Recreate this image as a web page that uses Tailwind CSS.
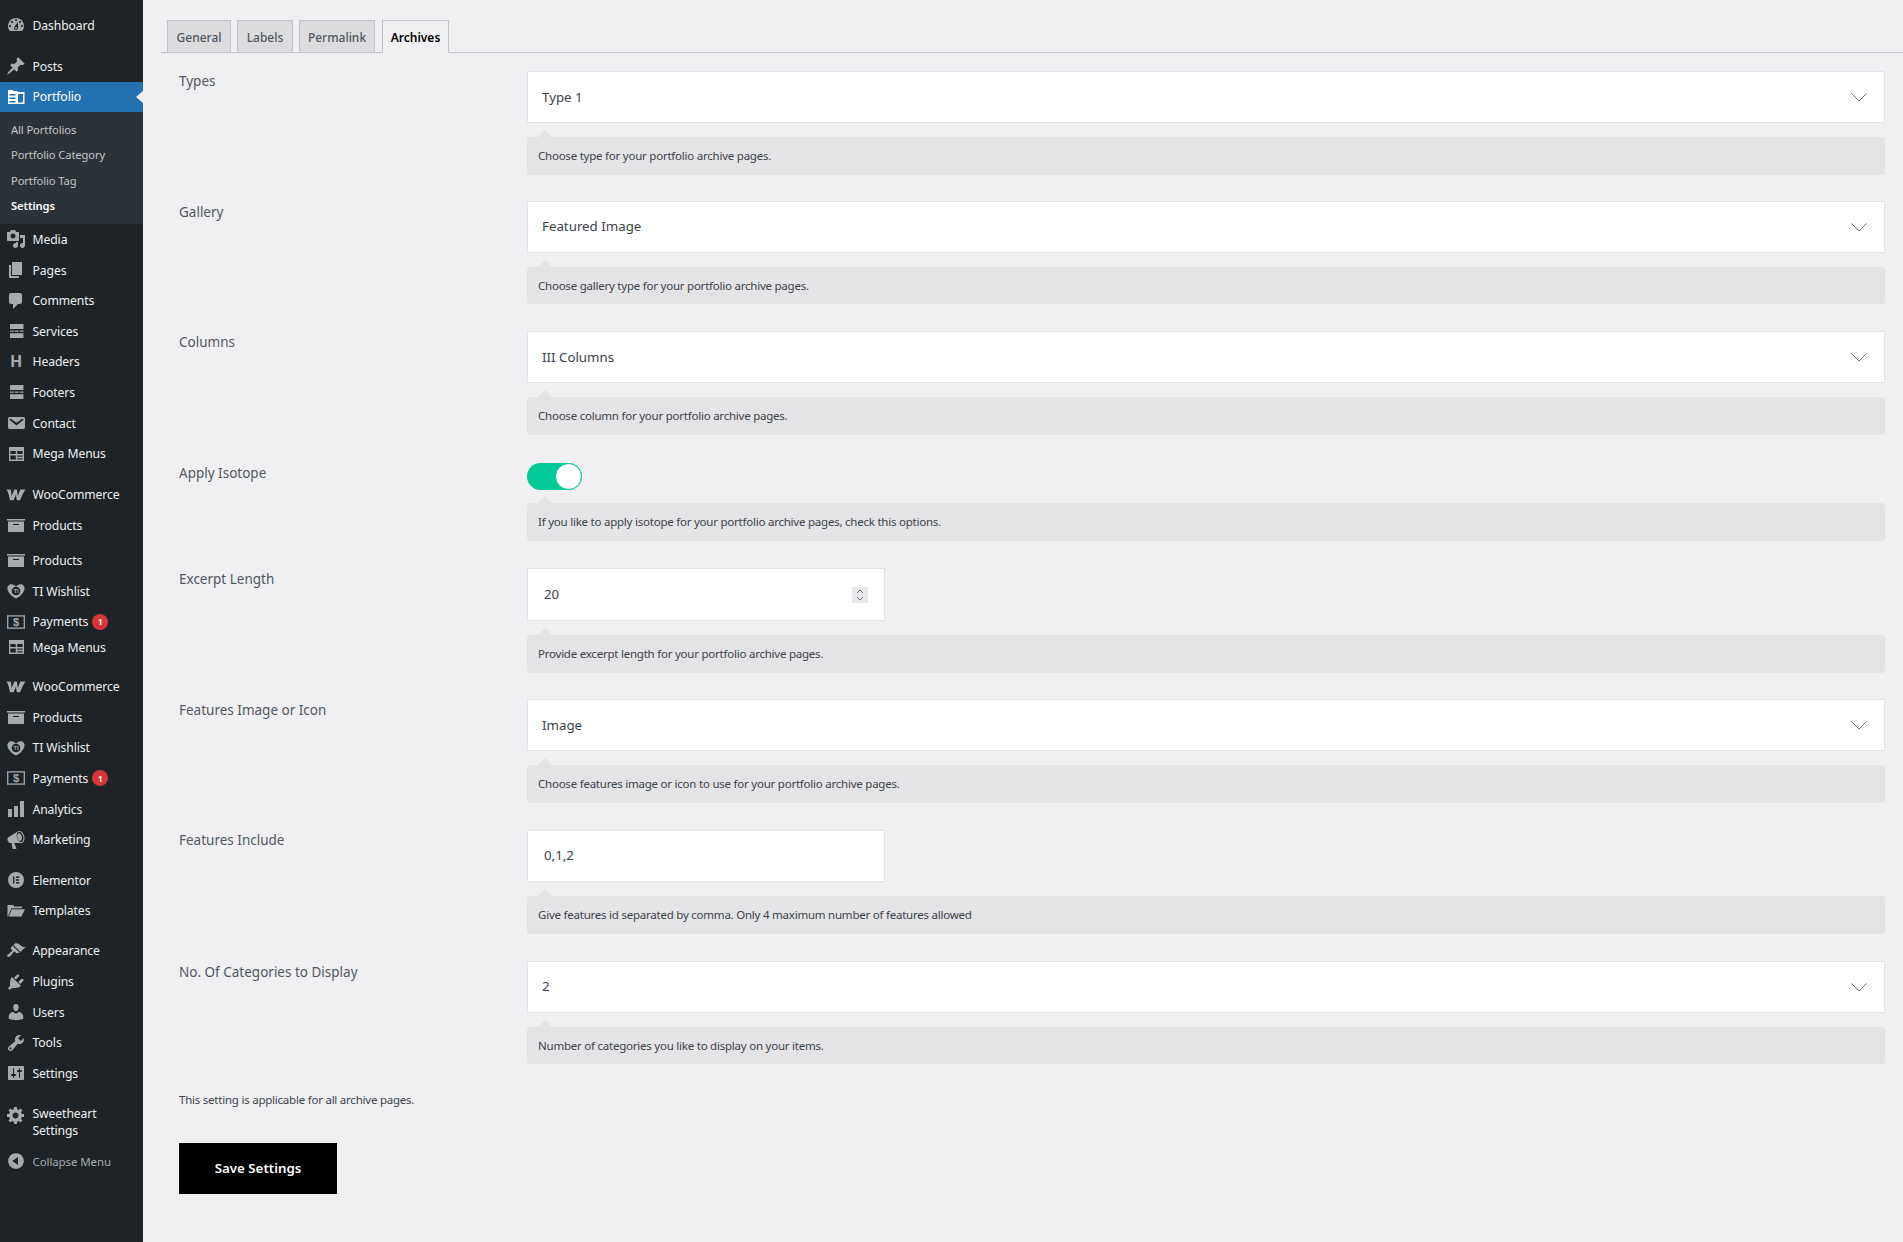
<!DOCTYPE html>
<html>
<head>
<meta charset="utf-8">
<script src="https://cdn.jsdelivr.net/npm/@tailwindcss/browser@4"></script>
</head>
<body class="bg-[#f0f0f2] font-['Noto_Sans',sans-serif] overflow-hidden">
<svg class="hidden">
<defs>
<symbol id="i-dash" viewBox="0 0 20 20"><path d="M3.76 16h12.48c1.1-1.37 1.76-3.11 1.76-5 0-4.42-3.58-8-8-8s-8 3.58-8 8c0 1.89.66 3.63 1.76 5zM10 4c.55 0 1 .45 1 1s-.45 1-1 1-1-.45-1-1 .45-1 1-1zM6 6c.55 0 1 .45 1 1s-.45 1-1 1-1-.45-1-1 .45-1 1-1zm8 0c.55 0 1 .45 1 1s-.45 1-1 1-1-.45-1-1 .45-1 1-1zm-5.37 5.55L12 7v6c0 1.1-.9 2-2 2s-2-.9-2-2c0-.57.24-1.08.63-1.45zM4 10c.55 0 1 .45 1 1s-.45 1-1 1-1-.45-1-1 .45-1 1-1zm12 0c.55 0 1 .45 1 1s-.45 1-1 1-1-.45-1-1 .45-1 1-1zm-5 3c0-.55-.45-1-1-1s-1 .45-1 1 .45 1 1 1 1-.45 1-1z" fill-rule="evenodd"/></symbol>
<symbol id="i-pin" viewBox="0 0 20 20"><path d="M10.44 3.02l1.82-1.82 6.36 6.35-1.83 1.82c-1.05-.68-2.48-.57-3.41.36l-.75.75c-.92.93-1.04 2.35-.35 3.41l-1.83 1.82-2.41-2.41-2.8 2.79c-.42.42-3.38 2.71-3.8 2.29s1.86-3.39 2.28-3.81l2.79-2.79L4.1 9.36l1.83-1.82c1.05.69 2.48.57 3.4-.36l.75-.75c.93-.92 1.05-2.35.36-3.41z"/></symbol>
<symbol id="i-portfolio" viewBox="0 0 20 20"><path fill-rule="evenodd" d="M2 3h5v1h4.500v1H18.500v12H2zM3.500 7v1.500h6V7zM3.500 10.500V12h6v-1.500zM3.500 14v1.500h6V14zM12 7v8.500h5V7z"/></symbol>
<symbol id="i-media" viewBox="0 0 20 20"><path fill-rule="evenodd" d="M13 11V4c0-.55-.45-1-1-1h-1.670L9 1H5L3.670 3H2c-.55 0-1 .45-1 1v7c0 .55.45 1 1 1h10c.55 0 1-.45 1-1zM7 4.500c1.380 0 2.500 1.120 2.500 2.500S8.380 9.500 7 9.500 4.500 8.380 4.500 7 5.620 4.500 7 4.500zM14 6h5v10.500c0 1.380-1.120 2.500-2.500 2.500S14 17.880 14 16.500s1.120-2.500 2.500-2.500c.170 0 .340.020.5.050V9h-3V6zm-4 8.050V13h2v3.500c0 1.380-1.120 2.500-2.500 2.500S7 17.880 7 16.500 8.120 14 9.500 14c.170 0 .340.020.5.050z"/></symbol>
<symbol id="i-page" viewBox="0 0 20 20"><path d="M6 15V2h10v13H6zm-1 1h8v2H3V5h2v11z"/></symbol>
<symbol id="i-comment" viewBox="0 0 20 20"><path d="M5 2h9c1.100 0 2 .9 2 2v7c0 1.100-.9 2-2 2h-2l-5 5v-5H5c-1.100 0-2-.9-2-2V4c0-1.100.9-2 2-2z"/></symbol>
<symbol id="i-rows" viewBox="0 0 20 20"><path d="M4 3h13.500v5H4zM4 9.400h3.800v1.400H4zM8.800 9.400h3.800v1.400H8.800zM13.700 9.400h3.800v1.400h-3.800zM4 12.200h13.500V17H4z"/></symbol>
<symbol id="i-mail" viewBox="0 0 20 20"><path fill-rule="evenodd" d="M3.870 4h13.250C18.370 4 19 4.590 19 5.790v8.420c0 1.190-.63 1.790-1.880 1.790H3.870c-1.250 0-1.880-.6-1.880-1.790V5.790c0-1.200.63-1.790 1.880-1.790zm6.620 8.600l6.740-5.530c.24-.2.43-.66.130-1.070-.29-.41-.82-.42-1.170-.17l-5.700 3.860L4.800 5.830c-.35-.25-.88-.24-1.170.170-.3.410-.11.870.130 1.070l6.730 5.530z"/></symbol>
<symbol id="i-table" viewBox="0 0 20 20"><path fill-rule="evenodd" d="M3 3h15v14H3zM4.400 7v3h5.400V7zM11.200 7v3h5.400V7zM4.400 11.400v4.200h5.400v-4.200zM11.200 11.400v1.400h5.400v-1.400zM11.200 14.200v1.400h5.400v-1.400z"/></symbol>
<symbol id="i-woo" viewBox="0 0 20 20"><path d="M.5 4.500h4.200l1 6.500 2.600-6.500h2.600l.9 6.500 2.500-6.500h5.200c-1 1-3.300 5.600-5.300 10.700h-3.400l-.9-5.400-2.300 5.400H4C3.500 12 2 6 .5 4.500z"/></symbol>
<symbol id="i-archive" viewBox="0 0 20 20"><path fill-rule="evenodd" d="M19 4v1.500H1V4h18zM2 6.500h16V17H2V6.500zm11 3.500V9H7v1h6z"/></symbol>
<symbol id="i-heart" viewBox="0 0 20 20"><path d="M10 17.500c3.500-1.500 8-5.500 8.500-9.500.300-2.800-1.500-4.800-4-4.800-1.900 0-3.500 1-4.500 2.300-1-1.300-2.600-2.300-4.500-2.300-2.500 0-4.300 2-4 4.800.5 4 5 8 8.500 9.500z"/><circle cx="10" cy="10" r="4.300" fill="#1d2327"/><text x="10" y="12" text-anchor="middle" font-size="6" font-weight="700" font-family="Liberation Sans, sans-serif">TI</text></symbol>
<symbol id="i-pay" viewBox="0 0 20 20"><rect x="1.700" y="3.900" width="16.600" height="12.200" fill="none" stroke="#a7aaad" stroke-width="1.300"/><text x="10" y="14" text-anchor="middle" font-size="11" font-weight="700" font-family="Liberation Sans, sans-serif">$</text></symbol>
<symbol id="i-chart" viewBox="0 0 20 20"><path d="M18 18V2h-4v16h4zm-6 0V7H8v11h4zm-6 0v-8H2v8h4z"/></symbol>
<symbol id="i-mega" viewBox="0 0 20 20"><path fill-rule="evenodd" d="M18.150 5.940c.46 1.620.38 3.220-.02 4.480-.42 1.280-1.260 2.180-2.300 2.480-.16.06-.26.06-.4.06-.06.02-.12.02-.18.02-.06.02-.14.02-.22.02h-6.800l2.220 5.500c.02.14-.06.26-.14.340-.08.1-.24.16-.34.16H6.950c-.1 0-.26-.06-.34-.16-.08-.08-.16-.2-.14-.34l-1-5.500H4.250l-.02-.02c-.5.06-1.080-.18-1.540-.62s-.88-1.080-1.060-1.880c-.24-.8-.2-1.560-.02-2.200.18-.62.58-1.080 1.060-1.300l.02-.02 9-5.400c.1-.06.18-.1.24-.16.06-.04.14-.08.24-.12.16-.08.28-.12.5-.18 1.040-.3 2.240.1 3.220 1 .98.88 1.840 2.240 2.260 3.860zm-2.580 5.980h-.02c.4-.1.74-.34 1.040-.7.58-.7.86-1.760.86-3.040-.02-.64-.12-1.320-.3-2.020-.42-1.440-1.140-2.620-1.980-3.420-.82-.78-1.780-1.140-2.600-.92-.8.22-1.380.96-1.680 2-.32 1.040-.3 2.420.120 3.860.4 1.440 1.120 2.620 1.960 3.400.84.8 1.780 1.140 2.600.84zm-4.200-4.180c-.28-1.040-.28-2.020-.06-2.820.22-.8.62-1.420 1.240-1.580.58-.16 1.220.120 1.820.68.6.56 1.100 1.400 1.400 2.440.28 1.040.28 2.020.06 2.820-.22.820-.62 1.420-1.240 1.580-.58.16-1.220-.12-1.820-.68-.6-.56-1.100-1.400-1.400-2.440z"/></symbol>
<symbol id="i-el" viewBox="0 0 20 20"><path fill-rule="evenodd" d="M10 2a8 8 0 1 0 0 16 8 8 0 0 0 0-16zM7 6.500h1.400v7H7zM10 6.500h3.200v1.400H10zM10 9.300h3.200v1.400H10zM10 12.100h3.200v1.400H10z"/></symbol>
<symbol id="i-folder" viewBox="0 0 20 20"><path d="M1.500 4h5.500l1.500 1.500h7.500v1.700H5.500L2.500 14V15.500h-1zM5.800 8.200H19l-3.600 7.300H2.800z"/></symbol>
<symbol id="i-brush" viewBox="0 0 20 20"><path d="M14.480 11.060L7.410 3.990l1.500-1.500c.5-.56 2.300-.47 3.510.32 1.210.8 1.430 1.280 2.910 2.100 1.180.64 2.450 1.260 4.450.85zm-.71.71L6.700 4.700 4.930 6.470c-.39.39-.39 1.020 0 1.410l1.060 1.060c.39.39.39 1.030 0 1.420-.6.6-1.430 1.110-2.210 1.690-.35.26-.7.53-1.010.84C1.430 13.230.5 14.500 1.500 15.500s2.270.07 3.640-1.270c.31-.31.58-.66.84-1.010.58-.78 1.090-1.610 1.690-2.210.39-.39 1.020-.39 1.410 0l1.060 1.060c.39.39 1.020.39 1.410 0z"/></symbol>
<symbol id="i-plug" viewBox="0 0 20 20"><path d="M13.110 4.360L9.870 7.600 8 5.730l3.240-3.240c.35-.34 1.050-.2 1.560.32.52.51.66 1.210.31 1.550zm-8 1.770l.91-1.120 9.010 9.010-1.190.84c-.71.71-2.630 1.160-3.820 1.160H6.140L4.900 17.260c-.59.59-1.540.59-2.120 0-.59-.58-.59-1.530 0-2.120l1.240-1.240v-3.880c0-1.130.4-3.190 1.090-3.890zm7.260 3.970l3.240-3.240c.34-.35 1.040-.21 1.550.31.52.51.66 1.210.31 1.550l-3.240 3.250z"/></symbol>
<symbol id="i-user" viewBox="0 0 20 20"><path d="M10 9.250c-2.270 0-2.730-3.440-2.730-3.440C7 4.020 7.820 2 9.970 2c2.160 0 2.980 2.020 2.710 3.810 0 0-.41 3.440-2.680 3.440zm0 2.570L12.720 10c2.390 0 4.520 2.330 4.520 4.530v2.490s-3.650 1.130-7.240 1.130c-3.650 0-7.240-1.130-7.240-1.130v-2.490c0-2.250 1.940-4.480 4.470-4.480z"/></symbol>
<symbol id="i-tool" viewBox="0 0 20 20"><path fill-rule="evenodd" d="M16.680 9.770c-1.340 1.340-3.300 1.670-4.950.99l-5.410 6.520c-.99.99-2.590.99-3.580 0s-.99-2.590 0-3.570l6.520-5.420c-.68-1.650-.35-3.610.99-4.950 1.280-1.280 3.120-1.620 4.720-1.060l-2.890 2.890 2.820 2.820 2.860-2.870c.53 1.580.18 3.390-1.080 4.650zM3.810 16.210c.4.39 1.040.39 1.430 0 .4-.4.4-1.040 0-1.430-.39-.4-1.030-.4-1.430 0-.39.39-.39 1.030 0 1.430z"/></symbol>
<symbol id="i-set" viewBox="0 0 20 20"><path fill-rule="evenodd" d="M18 16V4c0-.55-.45-1-1-1H3c-.55 0-1 .45-1 1v12c0 .55.45 1 1 1h14c.55 0 1-.45 1-1zM8 11h1c.55 0 1 .45 1 1s-.45 1-1 1H8v1.500c0 .28-.22.5-.5.5s-.5-.22-.5-.5V13H6c-.55 0-1-.45-1-1s.45-1 1-1h1V5.500c0-.28.22-.5.5-.5s.5.22.5.5V11zm5-2h-1c-.55 0-1-.45-1-1s.45-1 1-1h1V5.500c0-.28.22-.5.5-.5s.5.22.5.5V7h1c.55 0 1 .45 1 1s-.45 1-1 1h-1v5.500c0 .28-.22.5-.5.5s-.5-.22-.5-.5V9z"/></symbol>
<symbol id="i-gear" viewBox="0 0 20 20"><path fill-rule="evenodd" d="M18 12h-2.180c-.17.7-.44 1.350-.81 1.930l1.540 1.540-2.100 2.100-1.540-1.540c-.58.36-1.230.63-1.910.79V19H8v-2.180c-.68-.16-1.330-.43-1.910-.79l-1.540 1.540-2.120-2.120 1.540-1.540c-.36-.58-.63-1.230-.79-1.910H1V9.030h2.170c.16-.7.44-1.350.8-1.940L2.430 5.550l2.100-2.100 1.540 1.540c.58-.37 1.240-.64 1.930-.81V2h3v2.180c.68.16 1.330.43 1.910.79l1.540-1.540 2.120 2.120-1.540 1.540c.36.59.64 1.240.8 1.940H18V12zm-8.500 1.500c1.660 0 3-1.340 3-3s-1.340-3-3-3-3 1.340-3 3 1.340 3 3 3z"/></symbol>
<symbol id="i-collapse" viewBox="0 0 20 20"><path fill-rule="evenodd" d="M10 2.160c4.330 0 7.840 3.510 7.840 7.840s-3.510 7.840-7.840 7.840S2.160 14.330 2.160 10 5.710 2.160 10 2.160zm2 11.720V6.120L6.180 9.970z"/></symbol>
</defs>
</svg>

<div class="flex h-[1242px] w-[1903px]">
  <!-- sidebar -->
  <nav class="w-[143px] shrink-0 bg-[#1d2327] text-[#f0f0f1] text-[12.2px] tracking-[-0.1px] leading-[17px] pt-[10px]">
    <a class="flex items-center h-[30.6px]"><svg class="w-5 h-5 ml-[6px] mr-[6.5px] fill-[#a7aaad]"><use href="#i-dash"/></svg>Dashboard</a>
    <a class="flex items-center h-[30.6px] mt-[10.5px]"><svg class="w-5 h-5 ml-[6px] mr-[6.5px] fill-[#a7aaad]"><use href="#i-pin"/></svg>Posts</a>
    <a class="relative flex items-center h-[30px] bg-[#2271b1] text-white"><svg class="w-5 h-5 ml-[6px] mr-[6.5px] fill-white"><use href="#i-portfolio"/></svg>Portfolio<span class="absolute right-0 top-[9px] border-y-[6px] border-y-transparent border-r-[7px] border-r-[#f0f0f2]"></span></a>
    <div class="bg-[#2c3338] h-[112px] pt-[5px] pl-[11px] text-[11.2px] text-[#c3c4c7]">
      <a class="flex items-center h-[25.5px]">All Portfolios</a>
      <a class="flex items-center h-[25.5px]">Portfolio Category</a>
      <a class="flex items-center h-[25.5px]">Portfolio Tag</a>
      <a class="flex items-center h-[25.5px] font-semibold text-white">Settings</a>
    </div>
    <a class="flex items-center h-[30.6px] mt-[0.5px]"><svg class="w-5 h-5 ml-[6px] mr-[6.5px] fill-[#a7aaad]"><use href="#i-media"/></svg>Media</a>
    <a class="flex items-center h-[30.6px]"><svg class="w-5 h-5 ml-[6px] mr-[6.5px] fill-[#a7aaad]"><use href="#i-page"/></svg>Pages</a>
    <a class="flex items-center h-[30.6px]"><svg class="w-5 h-5 ml-[6px] mr-[6.5px] fill-[#a7aaad]"><use href="#i-comment"/></svg>Comments</a>
    <a class="flex items-center h-[30.6px]"><svg class="w-5 h-5 ml-[6px] mr-[6.5px] fill-[#a7aaad]"><use href="#i-rows"/></svg>Services</a>
    <a class="flex items-center h-[30.6px]"><span class="w-5 ml-[6px] mr-[6.5px] text-center text-[16px] font-bold text-[#a7aaad]">H</span>Headers</a>
    <a class="flex items-center h-[30.6px]"><svg class="w-5 h-5 ml-[6px] mr-[6.5px] fill-[#a7aaad]"><use href="#i-rows"/></svg>Footers</a>
    <a class="flex items-center h-[30.6px]"><svg class="w-5 h-5 ml-[6px] mr-[6.5px] fill-[#a7aaad]"><use href="#i-mail"/></svg>Contact</a>
    <a class="flex items-center h-[30.6px]"><svg class="w-5 h-5 ml-[6px] mr-[6.5px] fill-[#a7aaad]"><use href="#i-table"/></svg>Mega Menus</a>
    <a class="flex items-center h-[30.6px] mt-[10.5px]"><svg class="w-5 h-5 ml-[6px] mr-[6.5px] fill-[#a7aaad]"><use href="#i-woo"/></svg>WooCommerce</a>
    <a class="flex items-center h-[30.6px]"><svg class="w-5 h-5 ml-[6px] mr-[6.5px] fill-[#a7aaad]"><use href="#i-archive"/></svg>Products</a>
    <a class="flex items-center h-[30.6px] mt-[4.5px]"><svg class="w-5 h-5 ml-[6px] mr-[6.5px] fill-[#a7aaad]"><use href="#i-archive"/></svg>Products</a>
    <a class="flex items-center h-[30.6px]"><svg class="w-5 h-5 ml-[6px] mr-[6.5px] fill-[#a7aaad]"><use href="#i-heart"/></svg>TI Wishlist</a>
    <a class="flex items-center h-[30.6px]"><svg class="w-5 h-5 ml-[6px] mr-[6.5px] fill-[#a7aaad]"><use href="#i-pay"/></svg>Payments<span class="ml-[4px] w-4 h-4 rounded-full bg-[#d63638] text-white text-[9px] font-semibold flex items-center justify-center">1</span></a>
    <a class="flex items-center h-[25px] -mt-[2px]"><svg class="w-5 h-5 ml-[6px] mr-[6.5px] fill-[#a7aaad]"><use href="#i-table"/></svg>Mega Menus</a>
    <a class="flex items-center h-[30.6px] mt-[11.5px]"><svg class="w-5 h-5 ml-[6px] mr-[6.5px] fill-[#a7aaad]"><use href="#i-woo"/></svg>WooCommerce</a>
    <a class="flex items-center h-[30.6px]"><svg class="w-5 h-5 ml-[6px] mr-[6.5px] fill-[#a7aaad]"><use href="#i-archive"/></svg>Products</a>
    <a class="flex items-center h-[30.6px]"><svg class="w-5 h-5 ml-[6px] mr-[6.5px] fill-[#a7aaad]"><use href="#i-heart"/></svg>TI Wishlist</a>
    <a class="flex items-center h-[30.6px]"><svg class="w-5 h-5 ml-[6px] mr-[6.5px] fill-[#a7aaad]"><use href="#i-pay"/></svg>Payments<span class="ml-[4px] w-4 h-4 rounded-full bg-[#d63638] text-white text-[9px] font-semibold flex items-center justify-center">1</span></a>
    <a class="flex items-center h-[30.6px]"><svg class="w-5 h-5 ml-[6px] mr-[6.5px] fill-[#a7aaad]"><use href="#i-chart"/></svg>Analytics</a>
    <a class="flex items-center h-[30.6px]"><svg class="w-5 h-5 ml-[6px] mr-[6.5px] fill-[#a7aaad]"><use href="#i-mega"/></svg>Marketing</a>
    <a class="flex items-center h-[30.6px] mt-[10px]"><svg class="w-5 h-5 ml-[6px] mr-[6.5px] fill-[#a7aaad]"><use href="#i-el"/></svg>Elementor</a>
    <a class="flex items-center h-[30.6px]"><svg class="w-5 h-5 ml-[6px] mr-[6.5px] fill-[#a7aaad]"><use href="#i-folder"/></svg>Templates</a>
    <a class="flex items-center h-[30.6px] mt-[9.5px]"><svg class="w-5 h-5 ml-[6px] mr-[6.5px] fill-[#a7aaad]"><use href="#i-brush"/></svg>Appearance</a>
    <a class="flex items-center h-[30.6px]"><svg class="w-5 h-5 ml-[6px] mr-[6.5px] fill-[#a7aaad]"><use href="#i-plug"/></svg>Plugins</a>
    <a class="flex items-center h-[30.6px]"><svg class="w-5 h-5 ml-[6px] mr-[6.5px] fill-[#a7aaad]"><use href="#i-user"/></svg>Users</a>
    <a class="flex items-center h-[30.6px]"><svg class="w-5 h-5 ml-[6px] mr-[6.5px] fill-[#a7aaad]"><use href="#i-tool"/></svg>Tools</a>
    <a class="flex items-center h-[30.6px]"><svg class="w-5 h-5 ml-[6px] mr-[6.5px] fill-[#a7aaad]"><use href="#i-set"/></svg>Settings</a>
    <a class="flex items-start mt-[10.5px] pt-[6px] h-[47px]"><svg class="w-5 h-5 ml-[6px] mr-[6.5px] fill-[#a7aaad]"><use href="#i-gear"/></svg><span>Sweetheart<br>Settings</span></a>
    <a class="flex items-center h-[30.6px] text-[#a7aaad] text-[11.5px]"><svg class="w-5 h-5 ml-[6px] mr-[6.5px] fill-[#a7aaad]"><use href="#i-collapse"/></svg>Collapse Menu</a>
  </nav>

  <!-- main -->
  <main class="flex-1 min-w-0 text-[#3c434a]">
    <div class="ml-[18px] mt-[20px] h-[33px] border-b border-[#c3c4c7] flex pl-[6px] gap-[6px] text-[12px] font-medium text-[#50575e]">
      <a class="h-[33px] w-[64px] pt-[2px] flex items-center justify-center bg-[#dcdcde] border border-[#c3c4c7]">General</a>
      <a class="h-[33px] w-[56px] pt-[2px] flex items-center justify-center bg-[#dcdcde] border border-[#c3c4c7]">Labels</a>
      <a class="h-[33px] w-[76px] pt-[2px] flex items-center justify-center bg-[#dcdcde] border border-[#c3c4c7]">Permalink</a>
      <a class="h-[33px] w-[67px] ml-[1px] pt-[2px] flex items-center justify-center bg-[#f0f0f2] border border-[#c3c4c7] border-b-[#f0f0f2] font-semibold text-black">Archives</a>
    </div>

    <div class="pl-[36px] pr-[18px] pt-[18px]">
      <!-- Types -->
      <div class="flex mb-[26px]">
        <div class="w-[348px] shrink-0 text-[13.5px] leading-[20px] text-[#50575e]">Types</div>
        <div class="flex-1">
          <div class="h-[52px] pt-[1px] bg-white border border-[#e2e4e7] flex items-center justify-between pl-[14px] pr-[17px] text-[13.3px]">Type 1<svg class="w-[16px] h-[9px] stroke-[#6b7075] fill-none" viewBox="0 0 16 9"><path d="M.5.5l7.500 7.500L15.500.5"/></svg></div>
          <div class="relative mt-[14px] h-[37.5px] bg-[#e4e4e6] rounded-[3px] flex items-center pl-[11px] text-[11.5px] tracking-[-0.23px]"><span class="absolute left-[11px] -top-[7px] border-x-[7px] border-x-transparent border-b-[7px] border-b-[#e4e4e6]"></span>Choose type for your portfolio archive pages.</div>
        </div>
      </div>
      <!-- Gallery -->
      <div class="flex mb-[27px]">
        <div class="w-[348px] shrink-0 pt-[1px] text-[13.5px] leading-[20px] text-[#50575e]">Gallery</div>
        <div class="flex-1">
          <div class="h-[52px] pt-[1px] bg-white border border-[#e2e4e7] flex items-center justify-between pl-[14px] pr-[17px] text-[13.3px]">Featured Image<svg class="w-[16px] h-[9px] stroke-[#6b7075] fill-none" viewBox="0 0 16 9"><path d="M.5.5l7.500 7.500L15.500.5"/></svg></div>
          <div class="relative mt-[14px] h-[37.5px] bg-[#e4e4e6] rounded-[3px] flex items-center pl-[11px] text-[11.5px] tracking-[-0.23px]"><span class="absolute left-[11px] -top-[7px] border-x-[7px] border-x-transparent border-b-[7px] border-b-[#e4e4e6]"></span>Choose gallery type for your portfolio archive pages.</div>
        </div>
      </div>
      <!-- Columns -->
      <div class="flex mb-[28px]">
        <div class="w-[348px] shrink-0 pt-[1px] text-[13.5px] leading-[20px] text-[#50575e]">Columns</div>
        <div class="flex-1">
          <div class="h-[52px] pt-[1px] bg-white border border-[#e2e4e7] flex items-center justify-between pl-[14px] pr-[17px] text-[13.3px]">III Columns<svg class="w-[16px] h-[9px] stroke-[#6b7075] fill-none" viewBox="0 0 16 9"><path d="M.5.5l7.500 7.500L15.500.5"/></svg></div>
          <div class="relative mt-[14px] h-[37.5px] bg-[#e4e4e6] rounded-[3px] flex items-center pl-[11px] text-[11.5px] tracking-[-0.23px]"><span class="absolute left-[11px] -top-[7px] border-x-[7px] border-x-transparent border-b-[7px] border-b-[#e4e4e6]"></span>Choose column for your portfolio archive pages.</div>
        </div>
      </div>
      <!-- Isotope -->
      <div class="flex mb-[27px]">
        <div class="w-[348px] shrink-0 text-[13.5px] leading-[20px] text-[#50575e]">Apply Isotope</div>
        <div class="flex-1">
          <div class="w-[55px] h-[27px] rounded-full bg-[#00c897] relative"><span class="absolute right-0 top-0 w-[27px] h-[27px] rounded-full bg-white border border-[#00c897]"></span></div>
          <div class="relative mt-[13px] h-[38px] bg-[#e4e4e6] rounded-[3px] flex items-center pl-[11px] text-[11.5px] tracking-[-0.23px]"><span class="absolute left-[11px] -top-[7px] border-x-[7px] border-x-transparent border-b-[7px] border-b-[#e4e4e6]"></span>If you like to apply isotope for your portfolio archive pages, check this options.</div>
        </div>
      </div>
      <!-- Excerpt -->
      <div class="flex mb-[26px]">
        <div class="w-[348px] shrink-0 pt-[1px] text-[13.5px] leading-[20px] text-[#50575e]">Excerpt Length</div>
        <div class="flex-1">
          <div class="w-[358px] h-[53px] pt-[1px] bg-white border border-[#e2e4e7] flex items-center justify-between pl-[16px] pr-[16px] text-[13.3px]">20<span class="w-4 h-4 bg-[#e9e9ed] flex items-center justify-center"><svg class="w-[10px] h-[14px] stroke-[#6b7075] fill-none" viewBox="0 0 10 14"><path d="M2 5l3-3 3 3M2 9l3 3 3-3"/></svg></span></div>
          <div class="relative mt-[14px] h-[38px] bg-[#e4e4e6] rounded-[3px] flex items-center pl-[11px] text-[11.5px] tracking-[-0.23px]"><span class="absolute left-[11px] -top-[7px] border-x-[7px] border-x-transparent border-b-[7px] border-b-[#e4e4e6]"></span>Provide excerpt length for your portfolio archive pages.</div>
        </div>
      </div>
      <!-- Features Image -->
      <div class="flex mb-[27px]">
        <div class="w-[348px] shrink-0 pt-[1px] text-[13.5px] leading-[20px] text-[#50575e]">Features Image or Icon</div>
        <div class="flex-1">
          <div class="h-[52px] pt-[2px] bg-white border border-[#e2e4e7] flex items-center justify-between pl-[14px] pr-[17px] text-[13.3px]">Image<svg class="w-[16px] h-[9px] stroke-[#6b7075] fill-none" viewBox="0 0 16 9"><path d="M.5.5l7.500 7.500L15.500.5"/></svg></div>
          <div class="relative mt-[14px] h-[38px] bg-[#e4e4e6] rounded-[3px] flex items-center pl-[11px] text-[11.5px] tracking-[-0.23px]"><span class="absolute left-[11px] -top-[7px] border-x-[7px] border-x-transparent border-b-[7px] border-b-[#e4e4e6]"></span>Choose features image or icon to use for your portfolio archive pages.</div>
        </div>
      </div>
      <!-- Features Include -->
      <div class="flex mb-[27px]">
        <div class="w-[348px] shrink-0 text-[13.5px] leading-[20px] text-[#50575e]">Features Include</div>
        <div class="flex-1">
          <div class="w-[358px] h-[52px] pt-[1px] bg-white border border-[#e2e4e7] flex items-center pl-[16px] text-[13.3px]">0,1,2</div>
          <div class="relative mt-[14px] h-[38px] bg-[#e4e4e6] rounded-[3px] flex items-center pl-[11px] text-[11.5px] tracking-[-0.23px]"><span class="absolute left-[11px] -top-[7px] border-x-[7px] border-x-transparent border-b-[7px] border-b-[#e4e4e6]"></span>Give features id separated by comma. Only 4 maximum number of features allowed</div>
        </div>
      </div>
      <!-- Categories -->
      <div class="flex">
        <div class="w-[348px] shrink-0 pt-[1px] text-[13.5px] leading-[20px] text-[#50575e]">No. Of Categories to Display</div>
        <div class="flex-1">
          <div class="h-[52px] pt-[1px] bg-white border border-[#e2e4e7] flex items-center justify-between pl-[14px] pr-[17px] text-[13.3px]">2<svg class="w-[16px] h-[9px] stroke-[#6b7075] fill-none" viewBox="0 0 16 9"><path d="M.5.5l7.500 7.500L15.500.5"/></svg></div>
          <div class="relative mt-[14px] h-[37.5px] bg-[#e4e4e6] rounded-[3px] flex items-center pl-[11px] text-[11.5px] tracking-[-0.23px]"><span class="absolute left-[11px] -top-[7px] border-x-[7px] border-x-transparent border-b-[7px] border-b-[#e4e4e6]"></span>Number of categories you like to display on your items.</div>
        </div>
      </div>

      <p class="mt-[25.5px] text-[11.5px] tracking-[-0.23px] leading-[20px]">This setting is applicable for all archive pages.</p>
      <button class="mt-[33px] pt-[2px] w-[158px] h-[51px] bg-black text-white text-[13.3px] font-semibold block">Save Settings</button>
    </div>
  </main>
</div>
</body>
</html>
